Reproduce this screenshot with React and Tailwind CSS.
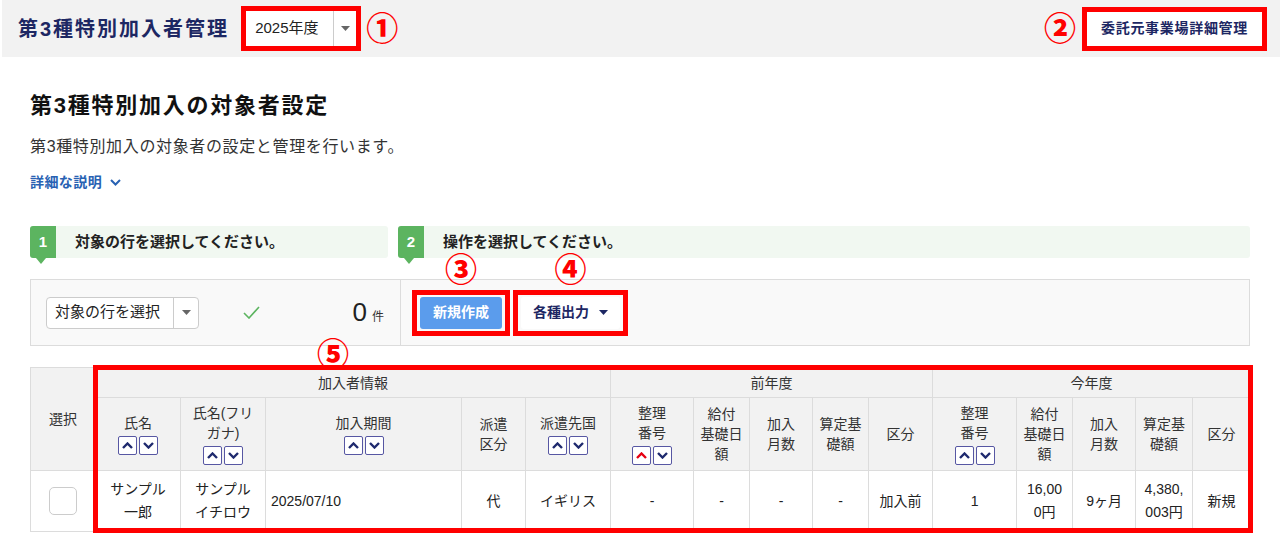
import React from "react";

function Caret({ color = "#666" }) {
  return (
    <svg width="9" height="5" viewBox="0 0 9 5">
      <polygon points="0,0 9,0 4.5,5" fill={color} />
    </svg>
  );
}

function Mark({ children, className = "" }) {
  return (
    <span className={`text-[32px] font-black leading-none text-[#ff0000] ${className}`}>{children}</span>
  );
}

function Chevron({ dir = "up", red = false }) {
  return (
    <span className="flex h-[19px] w-[19px] items-center justify-center rounded-[2px] border-[1.5px] border-[#5757a3] bg-white">
      <svg width="11" height="7" viewBox="0 0 11 7">
        <polyline
          points={dir === "up" ? "1,6 5.5,1.5 10,6" : "1,1 5.5,5.5 10,1"}
          fill="none"
          stroke={red ? "#e60012" : "#1f2a6e"}
          strokeWidth="2.4"
        />
      </svg>
    </span>
  );
}

function Sort({ red = false }) {
  return (
    <div className="mt-[3px] flex justify-center gap-[2px]">
      <Chevron dir="up" red={red} />
      <Chevron dir="down" />
    </div>
  );
}

function Step({ n, text, className = "" }) {
  return (
    <div className={`relative flex h-[32px] items-center rounded-[3px] bg-[#f1f8f1] ${className}`}>
      <div className="relative flex h-full w-[26px] items-center justify-center rounded-l-[3px] bg-[#5cb460] text-[15px] font-bold text-white">
        {n}
        <span className="absolute left-[6px] top-full h-0 w-0 border-x-[5px] border-t-[6px] border-x-transparent border-t-[#5cb460]"></span>
      </div>
      <span className="ml-[19px] text-[15px] font-bold text-[#222]">{text}</span>
    </div>
  );
}

export default function App() {
  const th = "border border-[#dcdcdc] bg-[#f2f2f2] px-[2px] font-normal text-[#333]";
  const td = "border border-[#dcdcdc] px-[2px] text-center";

  return (
    <div className="h-[548px] w-[1280px] overflow-hidden bg-white font-['Liberation_Sans','Noto_Sans_CJK_JP',sans-serif] text-[#222]">
      {/* Header */}
      <div className="ml-[2px] flex h-[57px] items-center bg-[#f2f2f2] pl-[16px] pr-[13px]">
        <h1 className="text-[20px] font-bold tracking-[0.1em] text-[#1d2763]">第3種特別加入者管理</h1>
        <div className="ml-[12px] h-[45px] w-[120px] border-[5px] border-[#ff0000] bg-white">
          <div className="flex h-full items-center">
            <span className="flex h-full flex-1 items-center border-r border-[#ccc] pl-[9px] text-[15px] text-[#222]">2025年度</span>
            <span className="flex h-full w-[22px] items-center justify-center">
              <Caret />
            </span>
          </div>
        </div>
        <Mark className="ml-[5px]">①</Mark>
        <div className="ml-auto flex items-center">
          <Mark>②</Mark>
          <div className="ml-[6px] flex h-[44px] w-[185px] items-center justify-center border-[5px] border-[#ff0000] bg-white text-[14px] font-bold tracking-[0.05em] text-[#1d2763]">
            委託元事業場詳細管理
          </div>
        </div>
      </div>

      <div className="px-[30px]">
        {/* Title */}
        <h2 className="mt-[33px] text-[22px] font-bold leading-[32px] tracking-[0.08em] text-[#111]">第3種特別加入の対象者設定</h2>
        <p className="mt-[13px] text-[16px] leading-[24px] tracking-[0.04em] text-[#333]">第3種特別加入の対象者の設定と管理を行います。</p>
        <div className="mt-[13px] flex h-[20px] items-center gap-[8px] text-[14px] font-bold text-[#2862b3]">
          <span className="tracking-[0.03em]">詳細な説明</span>
          <svg width="11" height="7" viewBox="0 0 11 7">
            <polyline points="1,1 5.5,5.5 10,1" fill="none" stroke="#2862b3" strokeWidth="2" />
          </svg>
        </div>

        {/* Steps */}
        <div className="mt-[34px] flex gap-[10px]">
          <Step n="1" text="対象の行を選択してください。" className="w-[358px]" />
          <Step n="2" text="操作を選択してください。" className="flex-1" />
        </div>

        {/* Operation bar */}
        <div className="mt-[21px] flex h-[67px] border border-[#dcdcdc] bg-[#f9f9f9]">
          <div className="flex w-[370px] items-center border-r border-[#dcdcdc] pl-[15px] pr-[16px]">
            <div className="flex h-[32px] w-[153px] items-center rounded-[4px] border border-[#ccc] bg-white">
              <span className="flex-1 pl-[8px] text-[15px] text-[#222]">対象の行を選択</span>
              <span className="flex h-full w-[25px] items-center justify-center border-l border-[#ccc]">
                <Caret />
              </span>
            </div>
            <svg className="ml-[44px]" width="17" height="13" viewBox="0 0 17 13">
              <polyline points="1,7 6,12 16,1" fill="none" stroke="#5cb460" strokeWidth="1.6" />
            </svg>
            <div className="ml-auto flex items-baseline gap-[5px]">
              <span className="text-[26px] leading-none text-[#222]">0</span>
              <span className="text-[12px] text-[#333]">件</span>
            </div>
          </div>
          <div className="flex items-center gap-[3px] pl-[11px]">
            <div className="relative">
              <Mark className="absolute bottom-[calc(100%+4px)] left-1/2 -translate-x-1/2">③</Mark>
              <div className="border-[5px] border-[#ff0000] px-[3px] py-[2px]">
                <div className="flex h-[32px] w-[82px] items-center justify-center rounded-[3px] bg-[#5b9cec] text-[14px] font-bold text-white">
                  新規作成
                </div>
              </div>
            </div>
            <div className="relative">
              <Mark className="absolute bottom-[calc(100%+4px)] left-1/2 -translate-x-1/2">④</Mark>
              <div className="border-[5px] border-[#ff0000] px-[3px] py-[2px]">
                <div className="flex h-[32px] w-[99px] items-center justify-center gap-[10px] rounded-[3px] bg-white text-[14px] font-bold text-[#1d2763]">
                  各種出力
                  <Caret color="#1d2763" />
                </div>
              </div>
            </div>
          </div>
        </div>

        {/* Table */}
        <div className="relative mt-[21px]">
          <Mark className="absolute left-[287px] top-[-28px]">⑤</Mark>
          <table className="w-full table-fixed border-collapse text-[14px]">
            <colgroup>
              <col className="w-[65px]" />
              <col className="w-[85px]" />
              <col className="w-[85px]" />
              <col className="w-[196px]" />
              <col className="w-[64px]" />
              <col className="w-[85px]" />
              <col className="w-[83px]" />
              <col className="w-[56px]" />
              <col className="w-[63px]" />
              <col className="w-[56px]" />
              <col className="w-[64px]" />
              <col className="w-[84px]" />
              <col className="w-[56px]" />
              <col className="w-[63px]" />
              <col className="w-[57px]" />
              <col className="w-[58px]" />
            </colgroup>
            <thead className="leading-[20px]">
              <tr className="h-[30px]">
                <th rowSpan={2} className={th}>選択</th>
                <th colSpan={5} className={th}>加入者情報</th>
                <th colSpan={5} className={th}>前年度</th>
                <th colSpan={5} className={th}>今年度</th>
              </tr>
              <tr className="h-[73px]">
                <th className={th}>氏名<Sort /></th>
                <th className={th}>氏名(フリ<br />ガナ)<Sort /></th>
                <th className={th}>加入期間<Sort /></th>
                <th className={th}>派遣<br />区分</th>
                <th className={th}>派遣先国<Sort /></th>
                <th className={th}>整理<br />番号<Sort red /></th>
                <th className={th}>給付<br />基礎日<br />額</th>
                <th className={th}>加入<br />月数</th>
                <th className={th}>算定基<br />礎額</th>
                <th className={th}>区分</th>
                <th className={th}>整理<br />番号<Sort /></th>
                <th className={th}>給付<br />基礎日<br />額</th>
                <th className={th}>加入<br />月数</th>
                <th className={th}>算定基<br />礎額</th>
                <th className={th}>区分</th>
              </tr>
            </thead>
            <tbody className="leading-[23px] text-[#222]">
              <tr className="h-[61px]">
                <td className={td}>
                  <span className="mx-auto block h-[28px] w-[28px] rounded-[5px] border border-[#ccc] bg-white"></span>
                </td>
                <td className={td}>サンプル<br />一郎</td>
                <td className={td}>サンプル<br />イチロウ</td>
                <td className="border border-[#dcdcdc] pl-[5px] text-left">2025/07/10</td>
                <td className={td}>代</td>
                <td className={td}>イギリス</td>
                <td className={td}>-</td>
                <td className={td}>-</td>
                <td className={td}>-</td>
                <td className={td}>-</td>
                <td className={td}>加入前</td>
                <td className={td}>1</td>
                <td className={td}>16,00<br />0円</td>
                <td className={td}>9ヶ月</td>
                <td className={td}>4,380,<br />003円</td>
                <td className={td}>新規</td>
              </tr>
            </tbody>
          </table>
          <div className="pointer-events-none absolute left-[63px] top-[-2px] h-[168px] w-[1160px] border-[5px] border-[#ff0000]"></div>
        </div>
      </div>
    </div>
  );
}
